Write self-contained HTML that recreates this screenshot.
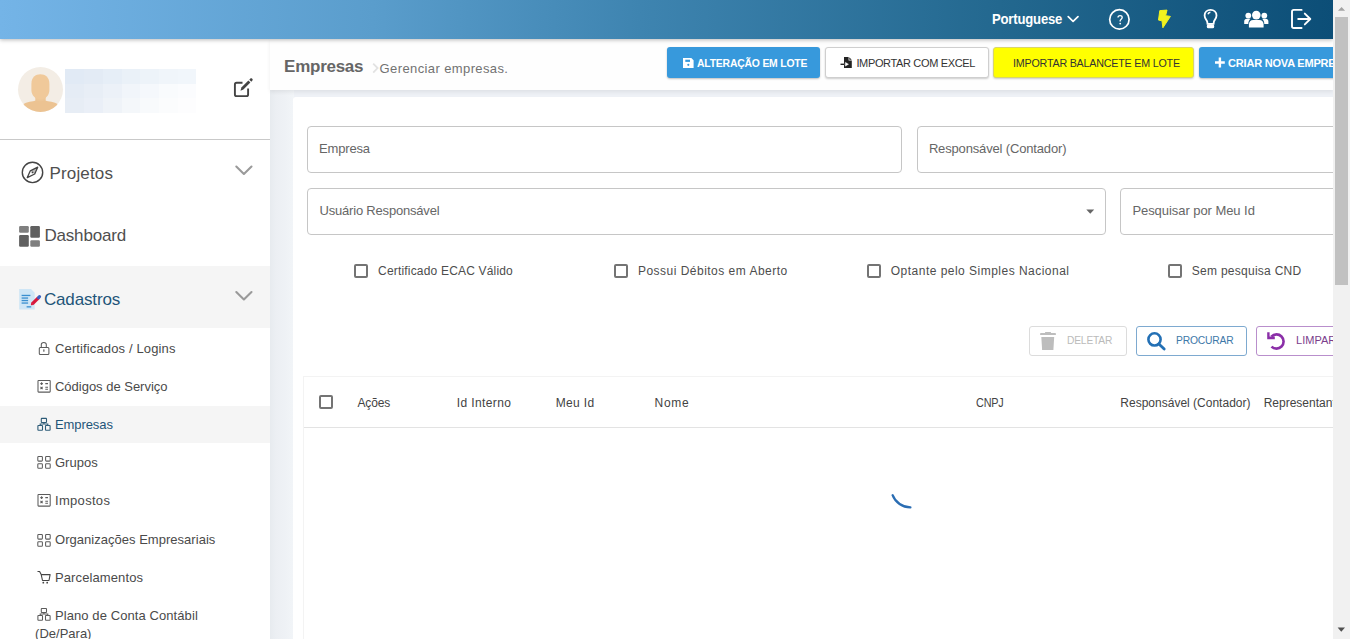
<!DOCTYPE html>
<html><head><meta charset="utf-8">
<style>
*{box-sizing:border-box;margin:0;padding:0}
html,body{width:1350px;height:639px;overflow:hidden;background:#eef1f6;font-family:"Liberation Sans",sans-serif;position:relative}
.a{position:absolute}
.t{position:absolute;white-space:nowrap;line-height:1}
svg{position:absolute;overflow:visible}
#hdr{left:0;top:0;width:1333px;height:39px;background:linear-gradient(90deg,#74b4e7 0%,#5a9dcc 28%,#3e84b0 48%,#23688f 75%,#0c4e77 100%);box-shadow:0 1px 4px rgba(0,0,0,.28);z-index:3}
#side{left:0;top:39px;width:270px;height:600px;background:#fff}
#pghdr{left:270px;top:39px;width:1063px;height:51px;background:#fefefe;box-shadow:0 2px 4px rgba(0,0,0,.07)}
#card{left:293px;top:97px;width:1045px;height:560px;background:#fff;border-radius:3px}
#sb{left:1333px;top:0;width:17px;height:639px;background:#f1f1f1;z-index:10}
#sb .thumb{position:absolute;left:2px;top:17px;width:13px;height:268px;background:#c1c1c1}
.btn{position:absolute;border-radius:3px}
.inp{position:absolute;border:1px solid #c6c6c6;border-radius:4px;background:#fff}
.cb{position:absolute;width:14px;height:14px;border:2px solid #747474;border-radius:2px;background:#fff}
#clip{position:absolute;left:0;top:0;width:1333px;height:639px;overflow:hidden}
</style></head><body>
<div id="clip">
<div id="side" class="a"></div>
<div class="a" style="left:270px;top:90px;width:24px;height:549px;background:linear-gradient(90deg,#e7ebef 0%,#eceff3 25%,#eef1f5 60%,#f2f5f8 100%)"></div>
<div id="pghdr" class="a"></div>
<div id="card" class="a"></div>
<!-- header icons -->
<svg style="left:0;top:0;z-index:4" width="1333" height="39">
 <polyline points="1068.2,16.6 1073.1,21.3 1078,16.6" fill="none" stroke="#fff" stroke-width="1.7" stroke-linecap="round" stroke-linejoin="round"/>
 <circle cx="1119.4" cy="19.4" r="9.7" fill="none" stroke="#fff" stroke-width="1.7"/>
 <path d="M1118.0,17.6 C1118.0,16.1 1118.8,15.6 1120.1,15.6 C1121.4,15.6 1122.2,16.3 1122.2,17.4 C1122.2,18.9 1120.5,19.2 1120.2,20.5 L1120.2,21.5" fill="none" stroke="#fff" stroke-width="1.35"/>
 <circle cx="1120.2" cy="23.6" r=".9" fill="#fff"/>
 <polygon points="1159.8,10.6 1167.0,10.1 1165.6,15.7 1170.4,16.4 1162.9,27.8 1162.0,20.8 1158.5,20.1" fill="#f2f21e" stroke="#f2f21e" stroke-width="1" stroke-linejoin="round"/>
 <path d="M1207.5,23.8 L1207.2,21.6 C1206.3,19.6 1204.6,18.2 1204.6,15.5 C1204.6,12.2 1207.2,9.9 1210.55,9.9 C1213.9,9.9 1216.5,12.2 1216.5,15.5 C1216.5,18.2 1214.8,19.6 1213.9,21.6 L1213.6,23.8 Z" fill="none" stroke="#fff" stroke-width="1.8"/>
 <path d="M1207.9,14.3 C1208.3,13.0 1209.2,12.3 1210.4,12.2" fill="none" stroke="#fff" stroke-width="1.4"/>
 <rect x="1206.8" y="24.3" width="7.4" height="4" rx="1.6" fill="#fff"/>
 <circle cx="1256.3" cy="15.1" r="4.3" fill="#fff"/>
 <path d="M1248.9,27.4 L1248.9,24.6 C1248.9,21.8 1250.6,20.0 1253.2,20.0 L1259.4,20.0 C1262.0,20.0 1263.6,21.8 1263.6,24.6 L1263.6,27.4 Z" fill="#fff"/>
 <circle cx="1248.3" cy="15.6" r="2.9" fill="#fff"/>
 <circle cx="1264.3" cy="15.6" r="2.9" fill="#fff"/>
 <path d="M1244.2,23.9 L1244.2,21.4 C1244.2,19.8 1245.3,18.8 1246.8,18.8 L1250.5,18.8 C1249.2,20.0 1248.3,21.8 1248.3,23.9 Z" fill="#fff"/>
 <path d="M1268.4,23.9 L1268.4,21.4 C1268.4,19.8 1267.3,18.8 1265.8,18.8 L1262.1,18.8 C1263.4,20.0 1264.3,21.8 1264.3,23.9 Z" fill="#fff"/>
 <path d="M1301.6,9.9 L1293.8,9.9 C1292.7,9.9 1292,10.6 1292,11.7 L1292,26.2 C1292,27.3 1292.7,28.0 1293.8,28.0 L1301.6,28.0" fill="none" stroke="#fff" stroke-width="1.9" stroke-linecap="round"/>
 <path d="M1298.2,19.0 L1310.2,19.0 M1304.8,13.6 L1310.3,19.0 L1304.8,24.4" fill="none" stroke="#fff" stroke-width="1.9" stroke-linecap="round" stroke-linejoin="round"/>
</svg>
<!-- avatar + blurred name -->
<div class="a" style="left:18px;top:67px;width:45px;height:45px;border-radius:50%;background:#f3ede5;overflow:hidden">
 <svg style="left:0;top:0" width="45" height="45">
 <path d="M17.3,28 L27.7,28 L27.7,35 L17.3,35 Z" fill="#edc697"/>
 <path d="M2,45 L4.5,37.5 C9,35 14.5,34.5 18,33.6 C20,34.6 25,34.6 27,33.6 C30.5,34.5 36,35 40.5,37.5 L43,45 Z" fill="#ecc392"/>
 <path d="M13.4,17 C13.4,10.2 17.5,7.3 22.4,7.3 C27.3,7.3 31.4,10.2 31.4,17 L31.4,23 C31.4,28.5 27.2,32.6 22.4,32.6 C17.6,32.6 13.4,28.5 13.4,23 Z" fill="#f0c99a"/>
 </svg>
</div>
<div class="a" style="left:65px;top:69.0px;width:19px;height:15.0px;background:#e1eaf5"></div>
<div class="a" style="left:84px;top:69.0px;width:19px;height:15.0px;background:#e3ebf5"></div>
<div class="a" style="left:103px;top:69.0px;width:19px;height:15.0px;background:#e6eef7"></div>
<div class="a" style="left:122px;top:69.0px;width:18px;height:15.0px;background:#eaf1f8"></div>
<div class="a" style="left:140px;top:69.0px;width:19px;height:15.0px;background:#edf3f9"></div>
<div class="a" style="left:159px;top:69.0px;width:19px;height:15.0px;background:#f0f5fa"></div>
<div class="a" style="left:178px;top:69.0px;width:18px;height:15.0px;background:#f1f6fb"></div>
<div class="a" style="left:65px;top:83.7px;width:19px;height:14.9px;background:#e5ecf5"></div>
<div class="a" style="left:84px;top:83.7px;width:19px;height:14.9px;background:#e8eef6"></div>
<div class="a" style="left:103px;top:83.7px;width:19px;height:14.9px;background:#ecf1f8"></div>
<div class="a" style="left:122px;top:83.7px;width:18px;height:14.9px;background:#f1f5fa"></div>
<div class="a" style="left:140px;top:83.7px;width:19px;height:14.9px;background:#f5f8fc"></div>
<div class="a" style="left:159px;top:83.7px;width:19px;height:14.9px;background:#f9fbfd"></div>
<div class="a" style="left:178px;top:83.7px;width:18px;height:14.9px;background:#fbfcfe"></div>
<div class="a" style="left:65px;top:98.3px;width:19px;height:15.0px;background:#e7edf5"></div>
<div class="a" style="left:84px;top:98.3px;width:19px;height:15.0px;background:#eaeff7"></div>
<div class="a" style="left:103px;top:98.3px;width:19px;height:15.0px;background:#eff3f8"></div>
<div class="a" style="left:122px;top:98.3px;width:18px;height:15.0px;background:#f4f7fa"></div>
<div class="a" style="left:140px;top:98.3px;width:19px;height:15.0px;background:#f8fafc"></div>
<div class="a" style="left:159px;top:98.3px;width:19px;height:15.0px;background:#fbfcfd"></div>
<div class="a" style="left:178px;top:98.3px;width:18px;height:15.0px;background:#fdfdfe"></div>
<!-- edit icon -->
<svg style="left:0;top:0" width="270" height="140">
 <path d="M242.5,82.8 L236.6,82.8 C235.5,82.8 234.9,83.5 234.9,84.6 L234.9,94.4 C234.9,95.5 235.5,96.1 236.6,96.1 L246.4,96.1 C247.5,96.1 248.1,95.5 248.1,94.4 L248.1,88.5" fill="none" stroke="#444" stroke-width="1.9"/>
 <path d="M240.5,90.8 L241.4,87.6 L248.4,80.6 L250.4,82.6 L243.4,89.6 Z" fill="#444"/>
 <path d="M249.3,79.7 L250.4,78.6 C250.9,78.1 251.5,78.1 252,78.6 L252.4,79 C252.9,79.5 252.9,80.1 252.4,80.6 L251.3,81.7 Z" fill="#444"/>
</svg>
<div class="a" style="left:0;top:139px;width:270px;height:1px;background:#c9c9c9"></div>
<!-- sidebar highlights -->
<div class="a" style="left:0;top:266px;width:270px;height:62px;background:#f5f5f5"></div>
<div class="a" style="left:0;top:406px;width:270px;height:37px;background:#f5f5f5"></div>
<!-- sidebar icons -->
<svg style="left:0;top:140px" width="270" height="499">
 <g transform="translate(0,-140)">
 <circle cx="32.5" cy="172.4" r="10.2" fill="none" stroke="#444" stroke-width="1.4"/>
 <path d="M27.3,177.6 L30.3,170.8 L37.7,167.2 L34.7,174.0 Z" fill="none" stroke="#444" stroke-width="1.3" stroke-linejoin="round"/><path d="M30.3,170.8 L37.7,167.2 L34.7,174.0 Z" fill="#444" opacity=".35"/><circle cx="32.5" cy="172.4" r=".9" fill="#444"/>
 <rect x="19.1" y="226.1" width="9.7" height="6.6" rx="1.2" fill="#7f7f7f"/>
 <rect x="30.3" y="226.1" width="9.6" height="11.7" rx="1.2" fill="#606060"/>
 <rect x="19.1" y="235.0" width="9.7" height="11.8" rx="1.2" fill="#606060"/>
 <rect x="30.3" y="240.2" width="9.6" height="6.6" rx="1.2" fill="#7f7f7f"/>
 <path d="M19.2,289 L31,289 L34.7,292.7 L34.7,309.6 L19.2,309.6 Z" fill="#cfe6f6"/>
 <rect x="21.6" y="294.8" width="8.8" height="1.3" fill="#3a8fd0"/>
 <rect x="21.6" y="297.4" width="6.5" height="1.3" fill="#3a8fd0"/>
 <rect x="21.6" y="299.9" width="6.5" height="1.3" fill="#3a8fd0"/>
 <rect x="21.6" y="302.4" width="6.5" height="1.3" fill="#3a8fd0"/>
 <rect x="26.6" y="306.2" width="4.6" height="1.3" fill="#3a8fd0"/>
 <path d="M32.3,303.9 L38.6,297.6" stroke="#d8183c" stroke-width="3.4" stroke-linecap="butt"/><path d="M30.9,305.2 L31.2,302.6 L33.6,305.0 Z" fill="#d8183c"/>
 <path d="M38.6,297.6 L39.5,296.7" stroke="#3b5fc0" stroke-width="3.2" stroke-linecap="round"/>
 <polyline points="236.3,166.6 243.9,173.9 251.5,166.6" fill="none" stroke="#9a9a9a" stroke-width="2.1" stroke-linecap="round" stroke-linejoin="round"/>
 <polyline points="236.3,292.1 243.9,299.4 251.5,292.1" fill="none" stroke="#9a9a9a" stroke-width="2.1" stroke-linecap="round" stroke-linejoin="round"/>
 <!-- lock -->
 <path d="M41.3,347.2 L41.3,344.6 C41.3,343.1 42.4,342.4 43.8,342.4 C45.2,342.4 46.3,343.1 46.3,344.6 L46.3,347.2" fill="none" stroke="#5c5c5c" stroke-width="1.05"/>
 <rect x="39.3" y="347.4" width="9.6" height="7.0" rx="1" fill="none" stroke="#5c5c5c" stroke-width="1.05"/>
 <rect x="43.2" y="349.2" width="1.3" height="2.6" rx=".6" fill="#666"/>
 <!-- calculator -->
 <g id="calc" fill="none" stroke="#5c5c5c" stroke-width="1.05">
  <rect x="38" y="380.5" width="12.2" height="11.6" rx=".6"/>
  <path d="M40.3,383.6 L42.9,383.6 M41.6,382.3 L41.6,384.9 M45.3,383.6 L48,383.6 M40.5,386.9 L42.6,389.1 M42.6,386.9 L40.5,389.1 M45.3,387.2 L48,387.2 M45.3,389.3 L48,389.3"/>
 </g>
 <g fill="none" stroke="#5c5c5c" stroke-width="1.05">
  <rect x="38" y="494.5" width="12.2" height="11.6" rx=".6"/>
  <path d="M40.3,497.6 L42.9,497.6 M41.6,496.3 L41.6,498.9 M45.3,497.6 L48,497.6 M40.5,500.9 L42.6,503.1 M42.6,500.9 L40.5,503.1 M45.3,501.2 L48,501.2 M45.3,503.3 L48,503.3"/>
 </g>
 <!-- sitemap (active) -->
 <g fill="none" stroke="#2e5c78" stroke-width="1.1">
  <rect x="41.3" y="418.4" width="5.2" height="4.1" rx=".5"/>
  <rect x="37.9" y="425.5" width="4.6" height="4.7" rx=".5"/>
  <rect x="45.5" y="425.5" width="4.6" height="4.7" rx=".5"/>
  <path d="M43.9,422.5 L43.9,424.0 M40.2,425.5 L40.2,424.0 L47.8,424.0 L47.8,425.5"/>
 </g>
 <g fill="none" stroke="#5c5c5c" stroke-width="1.05">
  <rect x="41.3" y="608.4" width="5.2" height="4.1" rx=".5"/>
  <rect x="37.9" y="615.5" width="4.6" height="4.7" rx=".5"/>
  <rect x="45.5" y="615.5" width="4.6" height="4.7" rx=".5"/>
  <path d="M43.9,612.5 L43.9,614.0 M40.2,615.5 L40.2,614.0 L47.8,614.0 L47.8,615.5"/>
 </g>
 <!-- grids -->
 <g fill="none" stroke="#5c5c5c" stroke-width="1.05">
  <rect x="37.8" y="456.5" width="4.6" height="4.6" rx=".8"/><rect x="45.6" y="456.5" width="4.6" height="4.6" rx=".8"/>
  <rect x="37.8" y="463.7" width="4.6" height="4.6" rx=".8"/><rect x="45.6" y="463.7" width="4.6" height="4.6" rx=".8"/>
 </g>
 <g fill="none" stroke="#5c5c5c" stroke-width="1.05">
  <rect x="37.8" y="534.5" width="4.6" height="4.6" rx=".8"/><rect x="45.6" y="534.5" width="4.6" height="4.6" rx=".8"/>
  <rect x="37.8" y="541.7" width="4.6" height="4.6" rx=".8"/><rect x="45.6" y="541.7" width="4.6" height="4.6" rx=".8"/>
 </g>
 <!-- cart -->
 <path d="M37.5,571.5 L39.6,571.5 L41.2,574.6 L50.1,574.6 L49.0,580.5 L42.5,580.5 L41.2,574.6" fill="none" stroke="#444" stroke-width="1.1" stroke-linejoin="round"/>
 <circle cx="43.3" cy="582.7" r=".9" fill="#444"/><circle cx="47.2" cy="582.7" r=".9" fill="#444"/>
 </g>
</svg>
<!-- top buttons -->
<div class="btn" style="left:667px;top:47px;width:153px;height:31px;background:#3799dc;box-shadow:0 1px 2px rgba(0,0,0,.25)"></div>
<div class="btn" style="left:825px;top:47px;width:164px;height:31px;background:#fff;border:1px solid #cfcfcf;box-shadow:0 1px 2px rgba(0,0,0,.2)"></div>
<div class="btn" style="left:993px;top:47px;width:201px;height:31px;background:#ffff00;border:1px solid #d9d56a;box-shadow:0 1px 2px rgba(0,0,0,.2)"></div>
<div class="btn" style="left:1199px;top:47px;width:160px;height:31px;background:#3799dc;box-shadow:0 1px 2px rgba(0,0,0,.25)"></div>
<svg style="left:0;top:0" width="1333" height="90">
 <path d="M683,58 L691.3,58 L693.6,60.3 L693.6,68 L683,68 Z" fill="#fff"/>
 <rect x="685.3" y="59.7" width="4.7" height="2.2" fill="#3799dc"/>
 <circle cx="688.3" cy="64.8" r="1.1" fill="#3799dc"/>
 <path d="M844,57.1 L848.6,57.1 L848.6,60.6 L851.8,60.6 L851.8,67.9 L844,67.9 Z" fill="#222"/>
 <path d="M849.3,57.3 L851.7,59.8 L849.3,59.8 Z" fill="#222"/>
 <path d="M841,64.2 L845.3,64.2 L845.3,62.2 L848.6,64.2 L845.3,66.2 L845.3,64.2" fill="#fff" stroke="#fff" stroke-width=".3"/>
 <path d="M840.5,64.3 L844.2,64.3" stroke="#222" stroke-width="1.4"/>
 <path d="M1215,62.5 L1224.8,62.5 M1219.9,57.6 L1219.9,67.4" stroke="#fff" stroke-width="2.4"/>
</svg>
<svg style="left:0;top:0" width="400" height="90"><polyline points="373.2,63.6 377.6,68.1 373.2,72.6" fill="none" stroke="#e2e2e2" stroke-width="1.8"/></svg>
<!-- form inputs -->
<div class="inp" style="left:307px;top:126px;width:595px;height:47px"></div>
<div class="inp" style="left:917px;top:126px;width:430px;height:47px"></div>
<div class="inp" style="left:307px;top:188px;width:799px;height:47px"></div>
<div class="inp" style="left:1120px;top:188px;width:230px;height:47px"></div>
<svg style="left:0;top:0" width="1333" height="240"><polygon points="1086.3,209.4 1094.2,209.4 1090.25,213.7" fill="#666"/></svg>
<!-- checkboxes -->
<div class="cb" style="left:354px;top:264px"></div>
<div class="cb" style="left:614px;top:264px"></div>
<div class="cb" style="left:867px;top:264px"></div>
<div class="cb" style="left:1168px;top:264px"></div>
<!-- action buttons -->
<div class="btn" style="left:1029px;top:326px;width:98px;height:30px;border:1px solid #dcdcdc;background:#fff"></div>
<div class="btn" style="left:1136px;top:326px;width:111px;height:30px;border:1px solid #7eaad0;background:#fff"></div>
<div class="btn" style="left:1256px;top:326px;width:120px;height:30px;border:1px solid #b98fcc;background:#fff"></div>
<svg style="left:0;top:300px" width="1333" height="70"><g transform="translate(0,-300)">
 <rect x="1040.1" y="333.1" width="15.8" height="2.0" rx=".4" fill="#bdbdbd"/>
 <rect x="1045" y="331.9" width="6" height="1.6" rx=".5" fill="#bdbdbd"/>
 <path d="M1041.3,337 L1054.2,337 L1053.4,350 L1042.1,350 Z" fill="#bdbdbd"/>
 <circle cx="1154.5" cy="339.4" r="6.1" fill="none" stroke="#2370b5" stroke-width="2.6"/>
 <path d="M1158.9,343.9 L1164.2,349.1" stroke="#2370b5" stroke-width="2.8" stroke-linecap="round"/>
 <path d="M1271.5,346.6 C1272.8,347.9 1274.6,348.6 1276.5,348.6 C1280.4,348.6 1283.6,345.4 1283.6,341.5 C1283.6,337.6 1280.4,334.4 1276.5,334.4 C1274.5,334.4 1272.7,335.2 1271.4,336.6" fill="none" stroke="#8b2fa8" stroke-width="2.6"/>
 <path d="M1267.2,332.2 L1269.6,332.2 L1269.6,336.6 L1274.8,336.6 L1274.8,339.3 L1267.2,339.3 Z" fill="#8b2fa8"/>
</g></svg>
<!-- table -->
<div class="a" style="left:303px;top:376px;width:1040px;height:1px;background:#f3f3f3"></div>
<div class="a" style="left:303px;top:376px;width:1px;height:270px;background:#f3f3f3"></div>
<div class="a" style="left:304px;top:427px;width:1040px;height:1px;background:#e3e3e3"></div>
<div class="cb" style="left:319px;top:395px"></div>
<!-- spinner -->
<svg style="left:0;top:0" width="1333" height="639"><path d="M892.6,494.6 C894.3,499.9 898.3,503.5 910.4,507.5" fill="none"/>
 <path d="M892.6,495.2 A19,19 0 0 0 910.4,507.4" fill="none" stroke="#2a6db3" stroke-width="2.3" stroke-linecap="round"/>
</svg>

<span id="t_pt" class="t" style="left:992.10px;top:12.15px;font-size:14px;font-weight:700;color:#fff;letter-spacing:-0.200px;transform:scaleX(0.9360);transform-origin:0 0;z-index:4">Portuguese</span>
<span id="t_emp" class="t" style="left:284.10px;top:58.31px;font-size:17px;font-weight:700;color:#666;letter-spacing:-0.269px;">Empresas</span>
<span id="t_ger" class="t" style="left:379.60px;top:61.70px;font-size:13px;font-weight:400;color:#727272;letter-spacing:0.389px;">Gerenciar empresas.</span>
<span id="t_alt" class="t" style="left:697.10px;top:58.09px;font-size:11px;font-weight:700;color:#fff;letter-spacing:-0.200px;transform:scaleX(0.9437);transform-origin:0 0;">ALTERAÇÃO EM LOTE</span>
<span id="t_imp" class="t" style="left:856.40px;top:58.19px;font-size:11px;font-weight:400;color:#333;letter-spacing:-0.347px;">IMPORTAR COM EXCEL</span>
<span id="t_bal" class="t" style="left:1013.40px;top:58.09px;font-size:11px;font-weight:400;color:#333;letter-spacing:-0.200px;transform:scaleX(0.9723);transform-origin:0 0;">IMPORTAR BALANCETE EM LOTE</span>
<span id="t_cri" class="t" style="left:1228.10px;top:58.19px;font-size:11px;font-weight:700;color:#fff;letter-spacing:-0.206px;">CRIAR NOVA EMPRESA</span>
<span id="t_proj" class="t" style="left:49.50px;top:164.51px;font-size:17px;font-weight:400;color:#4f4f4f;letter-spacing:0.146px;">Projetos</span>
<span id="t_dash" class="t" style="left:44.40px;top:227.31px;font-size:17px;font-weight:400;color:#4f4f4f;letter-spacing:-0.171px;">Dashboard</span>
<span id="t_cad" class="t" style="left:43.90px;top:290.61px;font-size:17px;font-weight:400;color:#1f5579;letter-spacing:-0.136px;">Cadastros</span>
<span id="t_sub0" class="t" style="left:55.00px;top:341.70px;font-size:13px;font-weight:400;color:#4a4a4a;letter-spacing:0.131px;">Certificados / Logins</span>
<span id="t_sub1" class="t" style="left:55.00px;top:379.80px;font-size:13px;font-weight:400;color:#4a4a4a;letter-spacing:-0.014px;">Códigos de Serviço</span>
<span id="t_sub2" class="t" style="left:55.00px;top:417.60px;font-size:13px;font-weight:400;color:#1f5579;letter-spacing:-0.090px;">Empresas</span>
<span id="t_sub3" class="t" style="left:55.00px;top:455.50px;font-size:13px;font-weight:400;color:#4a4a4a;letter-spacing:0.000px;">Grupos</span>
<span id="t_sub4" class="t" style="left:55.00px;top:493.50px;font-size:13px;font-weight:400;color:#4a4a4a;letter-spacing:0.307px;">Impostos</span>
<span id="t_sub5" class="t" style="left:55.00px;top:533.40px;font-size:13px;font-weight:400;color:#4a4a4a;letter-spacing:0.026px;">Organizações Empresariais</span>
<span id="t_sub6" class="t" style="left:55.00px;top:570.70px;font-size:13px;font-weight:400;color:#4a4a4a;letter-spacing:0.107px;">Parcelamentos</span>
<span id="t_sub7" class="t" style="left:55.00px;top:609.00px;font-size:13px;font-weight:400;color:#4a4a4a;letter-spacing:0.085px;">Plano de Conta Contábil</span>
<span id="t_sub8" class="t" style="left:35.10px;top:627.00px;font-size:13px;font-weight:400;color:#4a4a4a;letter-spacing:0.000px;">(De/Para)</span>
<span id="t_f1" class="t" style="left:319.10px;top:142.20px;font-size:13px;font-weight:400;color:#666;letter-spacing:-0.189px;">Empresa</span>
<span id="t_f2" class="t" style="left:928.90px;top:142.00px;font-size:13px;font-weight:400;color:#666;letter-spacing:-0.157px;">Responsável (Contador)</span>
<span id="t_f3" class="t" style="left:319.50px;top:203.80px;font-size:13px;font-weight:400;color:#666;letter-spacing:-0.193px;">Usuário Responsável</span>
<span id="t_f4" class="t" style="left:1132.40px;top:203.80px;font-size:13px;font-weight:400;color:#666;letter-spacing:-0.057px;">Pesquisar por Meu Id</span>
<span id="t_c1" class="t" style="left:378.10px;top:264.84px;font-size:12px;font-weight:400;color:#4d4d4d;letter-spacing:0.180px;">Certificado ECAC Válido</span>
<span id="t_c2" class="t" style="left:637.90px;top:264.84px;font-size:12px;font-weight:400;color:#4d4d4d;letter-spacing:0.488px;">Possui Débitos em Aberto</span>
<span id="t_c3" class="t" style="left:890.80px;top:264.84px;font-size:12px;font-weight:400;color:#4d4d4d;letter-spacing:0.480px;">Optante pelo Simples Nacional</span>
<span id="t_c4" class="t" style="left:1191.80px;top:264.84px;font-size:12px;font-weight:400;color:#4d4d4d;letter-spacing:0.268px;">Sem pesquisa CND</span>
<span id="t_del" class="t" style="left:1067.10px;top:334.69px;font-size:11px;font-weight:400;color:#bbb;letter-spacing:-0.200px;transform:scaleX(0.9318);transform-origin:0 0;">DELETAR</span>
<span id="t_pro" class="t" style="left:1176.10px;top:334.89px;font-size:11px;font-weight:400;color:#3d78a8;letter-spacing:-0.200px;transform:scaleX(0.9358);transform-origin:0 0;">PROCURAR</span>
<span id="t_lim" class="t" style="left:1296.10px;top:334.89px;font-size:11px;font-weight:400;color:#7b3d8c;letter-spacing:0.000px;">LIMPAR</span>
<span id="t_h1" class="t" style="left:357.50px;top:396.84px;font-size:12px;font-weight:400;color:#434343;letter-spacing:-0.140px;">Ações</span>
<span id="t_h2" class="t" style="left:456.70px;top:396.84px;font-size:12px;font-weight:400;color:#434343;letter-spacing:0.400px;">Id Interno</span>
<span id="t_h3" class="t" style="left:555.70px;top:396.84px;font-size:12px;font-weight:400;color:#434343;letter-spacing:0.342px;">Meu Id</span>
<span id="t_h4" class="t" style="left:654.60px;top:396.84px;font-size:12px;font-weight:400;color:#434343;letter-spacing:0.661px;">Nome</span>
<span id="t_h5" class="t" style="left:975.60px;top:396.84px;font-size:12px;font-weight:400;color:#434343;letter-spacing:-0.200px;transform:scaleX(0.9010);transform-origin:0 0;">CNPJ</span>
<span id="t_h6" class="t" style="left:1120.30px;top:396.84px;font-size:12px;font-weight:400;color:#434343;letter-spacing:0.006px;">Responsável (Contador)</span>
<span id="t_h7" class="t" style="left:1263.70px;top:396.84px;font-size:12px;font-weight:400;color:#434343;letter-spacing:0.000px;">Representante</span>
<div id="hdr" class="a"></div>
</div>
<div id="sb" class="a"><div class="thumb"></div>
<svg style="left:0;top:0" width="17" height="639"><polygon points="5,10.8 12.1,10.8 8.55,7" fill="#a3a3a3"/><polygon points="4.6,627.4 12,627.4 8.3,631.7" fill="#505050"/></svg></div>
</body></html>
